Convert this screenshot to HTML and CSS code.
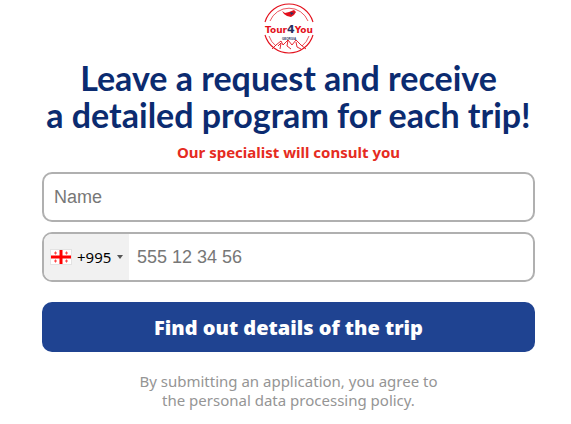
FILE: index.html
```html
<!DOCTYPE html>
<html lang="en">
<head>
<meta charset="utf-8">
<meta name="viewport" content="width=device-width, initial-scale=1">
<title>Tour4You</title>
<link rel="stylesheet" href="styles.css">
</head>
<body>
<main class="request">
  <svg class="logo" viewBox="0 0 52 52" role="img" aria-label="Tour4You Georgia">
    <g fill="none" stroke="#e3101c" stroke-width="1.1">
      <path d="M2 19A25 25 0 0 1 50 19M2 32A25 25 0 0 0 50 32"/>
      <path d="M7 18A20.500 20.500 0 0 1 45 18M6 33A21 21 0 0 0 13 43M46 33A21 21 0 0 1 39 43" stroke-width=".7"/>
      <path d="M9 46L13 42L18 38L20 42L25 37L29 42L33 37L38 42L43 46M15 43L18 40L17 46M25 37L24 43L28 46M33 39L34 44L38 46" stroke-width=".9"/>
    </g>
    <path d="M19 8L22 10L26 9L31 7L33 9L31 12L28 14L24 13L21 11Z" fill="#e3101c"/>
    <path d="M27 9L31 10L28 12Z" fill="#26305f"/>
    <text class="logo-name" x="26" y="30" text-anchor="middle">Tour<tspan class="logo-four">4</tspan>You</text>
    <text class="logo-place" x="26" y="37" text-anchor="middle">GEORGIA</text>
  </svg>
  <h1 class="title">Leave a request and receive<br>a detailed program for each trip!</h1>
  <p class="subtitle">Our specialist will consult you</p>
  <form class="form">
    <input class="field" type="text" placeholder="Name" aria-label="Name">
    <div class="field phone">
      <label class="country">
        <svg class="flag" viewBox="0 0 20 14" aria-hidden="true">
          <path d="M0 0H20V14H0Z" fill="#fff"/>
          <path d="M8.500 0H11.500V14H8.500ZM0 5.500H20V8.500H0Z" fill="#f00"/>
          <path d="M4 1.500H5V2.500H6V3.500H5V4.500H4V3.500H3V2.500H4ZM15 1.500H16V2.500H17V3.500H16V4.500H15V3.500H14V2.500H15ZM4 9.500H5V10.500H6V11.500H5V12.500H4V11.500H3V10.500H4ZM15 9.500H16V10.500H17V11.500H16V12.500H15V11.500H14V10.500H15Z" fill="#ff4545"/>
        </svg>
        <select class="code" aria-label="Country code"><option>+995</option></select>
        <svg class="caret" viewBox="0 0 6 4" aria-hidden="true"><path d="M0 0H6L3 4Z" fill="#555"/></svg>
      </label>
      <input class="number" type="tel" placeholder="555 12 34 56" aria-label="Phone number">
    </div>
    <button class="submit" type="submit">Find out details of the trip</button>
  </form>
  <p class="policy">By submitting an application, you agree to<br>the personal data processing policy.</p>
</main>
</body>
</html>
```
FILE: styles.css
```css
* {
  box-sizing: border-box;
}

body {
  margin: 0;
  background: #fff;
  font-family: "Trebuchet MS", "Noto Sans", sans-serif;
}

.request {
  display: flex;
  flex-direction: column;
  align-items: center;
  padding: 3px 36px 12px 42px;
  text-align: center;
}

.logo {
  width: 52px;
  height: 52px;
}

.logo-name {
  fill: #e3101c;
  font: 700 9px "DejaVu Sans", sans-serif;
}

.logo-four {
  fill: #26305f;
  font-size: 11px;
}

.logo-place {
  fill: #26305f;
  font: 700 3px "Liberation Sans", sans-serif;
}

.title {
  margin: 4px 0 0;
  color: #0b2b70;
  font-family: "Trebuchet MS", Lato, sans-serif;
  font-size: 34px;
  font-weight: 700;
  line-height: 37px;
  white-space: nowrap;
}

.subtitle {
  margin: 9px 0 0;
  color: #e52b21;
  font-size: 15px;
  font-weight: 700;
  line-height: 20px;
}

.form {
  display: flex;
  flex-direction: column;
  gap: 10px;
  width: 100%;
  margin-top: 10px;
}

.field {
  width: 100%;
  height: 50px;
  padding: 0 10px;
  border: 2px solid #b0b0b0;
  border-radius: 10px;
  background: #fff;
  font: 18px "Liberation Sans", sans-serif;
}

.phone {
  display: flex;
  padding: 0;
  overflow: hidden;
}

.country {
  display: flex;
  align-items: center;
  flex: none;
  padding: 0 6px 0 7px;
  background: #f1f1f1;
}

.flag {
  width: 20px;
  height: 14px;
  margin-right: 6px;
  outline: 1px solid #e3e3e3;
}

.code {
  appearance: none;
  width: 40px;
  padding: 0;
  border: 0;
  background: transparent;
  color: #000;
  font: 15px "Trebuchet MS", "Noto Sans", sans-serif;
}

.caret {
  width: 6px;
  height: 4px;
}

.number {
  flex: 1;
  min-width: 0;
  padding: 0 8px;
  border: 0;
  background: transparent;
  font: inherit;
}

.field::placeholder,
.number::placeholder {
  color: #777;
}

.submit {
  height: 50px;
  margin-top: 10px;
  border: 0;
  border-radius: 10px;
  background: #1f4391;
  color: #fff;
  font: 800 20px "Arial Black", "Open Sans", sans-serif;
}

.policy {
  margin: 20px 0 0;
  color: #959595;
  font-size: 15px;
  line-height: 19px;
}
```
